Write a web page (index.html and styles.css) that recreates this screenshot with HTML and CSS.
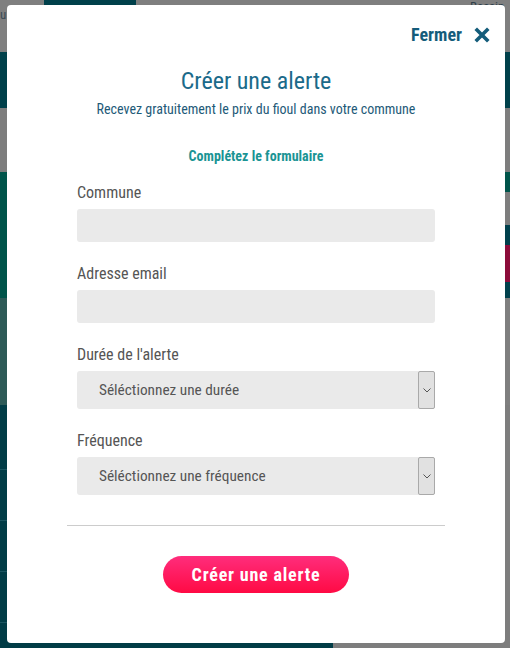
FILE: index.html
```html
<!DOCTYPE html>
<html lang="fr">
<head>
<meta charset="utf-8">
<title>Créer une alerte</title>
<link rel="stylesheet" href="styles.css">
</head>
<body>
<div class="page">
  <div class="row row-top">
    <div class="tab"></div>
    <span class="top-left-text">u</span>
    <span class="top-right-text">Bessin</span>
  </div>
  <div class="row row-teal"></div>
  <div class="row row-gray"></div>
  <div class="row row-green">
    <div class="fill green"></div>
    <div class="edge-right">
      <div class="seg seg-green"></div>
      <div class="seg seg-gray"></div>
      <div class="seg seg-teal"></div>
      <div class="seg seg-red"></div>
      <div class="seg seg-teal2"></div>
    </div>
  </div>
  <div class="row row-mid">
    <div class="fill mid"></div>
  </div>
  <div class="row row-bottom">
    <div class="fill bottom-teal">
      <div class="line"></div><div class="line"></div><div class="line"></div><div class="line"></div>
    </div>
    <div class="fill bottom-gray"></div>
  </div>

  <div class="modal">
    <div class="modal-head">
      <a class="close" href="#">Fermer
        <svg class="close-icon" viewBox="0 0 16 16" width="16" height="16" aria-hidden="true">
          <path d="M3 3 L13 13 M13 3 L3 13" stroke="#145c7a" stroke-width="3.6" stroke-linecap="square" fill="none"/>
        </svg>
      </a>
    </div>
    <h1 class="title">Créer une alerte</h1>
    <p class="subtitle">Recevez gratuitement le prix du fioul dans votre commune</p>
    <p class="hint">Complétez le formulaire</p>
    <form class="form">
      <div class="field">
        <label class="label">Commune</label>
        <div class="input"></div>
      </div>
      <div class="field">
        <label class="label">Adresse email</label>
        <div class="input"></div>
      </div>
      <div class="field">
        <label class="label">Durée de l'alerte</label>
        <div class="select">
          <span class="select-text">Séléctionnez une durée</span>
          <span class="select-arrow">
            <svg viewBox="0 0 8 5" width="8" height="5"><path d="M0.5 0.5 L4 4 L7.5 0.5" stroke="#555" stroke-width="1" fill="none"/></svg>
          </span>
        </div>
      </div>
      <div class="field">
        <label class="label">Fréquence</label>
        <div class="select">
          <span class="select-text">Séléctionnez une fréquence</span>
          <span class="select-arrow">
            <svg viewBox="0 0 8 5" width="8" height="5"><path d="M0.5 0.5 L4 4 L7.5 0.5" stroke="#555" stroke-width="1" fill="none"/></svg>
          </span>
        </div>
      </div>
    </form>
    <hr class="sep">
    <div class="actions">
      <button class="btn" type="button">Créer une alerte</button>
    </div>
  </div>
</div>
</body>
</html>
```
FILE: styles.css
```css
* { box-sizing: border-box; }
html, body { margin: 0; padding: 0; }
body {
  width: 510px;
  height: 648px;
  overflow: hidden;
  background: #7f7f7f;
  font-family: "Roboto Condensed", "DejaVu Sans Condensed", sans-serif;
}
.page { position: relative; width: 510px; height: 648px; }
.row { display: flex; width: 510px; }
.row-top { height: 52px; background: #7f7f7f; position: relative; }
.tab { position: absolute; left: 44px; top: 0; width: 92px; height: 6px; background: #00404a; }
.top-left-text { position: absolute; left: 0; top: 8px; color: #3a4a55; font-size: 13px; line-height: 14px; }
.top-right-text { position: absolute; left: 470px; top: 0; color: #2f3f4a; font-size: 13px; line-height: 14px; }
.row-teal { height: 56px; background: #00404a; }
.row-gray { height: 64px; background: #7d7d7d; }
.row-green { height: 126px; }
.fill { flex: 1; }
.green { background: #00544a; }
.edge-right { width: 5px; display: flex; flex-direction: column; }
.seg-green { height: 20px; background: #00544a; }
.seg-gray { height: 33px; background: #7d7d7d; }
.seg-teal { height: 20px; background: #00404c; }
.seg-red { height: 37px; background: #8c0c3a; }
.seg-teal2 { height: 16px; background: #00404c; }
.row-mid { height: 107px; }
.mid { flex: none; width: 10px; background: #2d5a57; }
.row-bottom { height: 243px; }
.bottom-teal { flex: none; width: 333px; background: #013c46; padding-top: 64px; }
.bottom-teal .line { height: 1px; background: #1b5560; margin-bottom: 50px; }
.bottom-gray { background: #7d7d7d; }

.modal {
  position: absolute;
  left: 7px;
  top: 5px;
  width: 498px;
  height: 638px;
  background: #fff;
  border-radius: 4px;
  padding: 20px 15px 0 15px;
  display: flex;
  flex-direction: column;
  align-items: center;
}
.modal-head { align-self: stretch; display: flex; justify-content: flex-end; height: 20px; }
.close {
  display: flex;
  align-items: center;
  gap: 12px;
  color: #145c7a;
  text-decoration: none;
  font-size: 18px;
  font-weight: 700;
  line-height: 20px;
}
.close-icon { display: block; }
.title {
  margin: 21px 0 0;
  font-size: 24px;
  font-weight: 400;
  line-height: 30px;
  color: #1b6a8a;
}
.subtitle {
  margin: 4px 0 0;
  font-size: 14px;
  font-weight: 400;
  line-height: 18px;
  color: #1e5a78;
}
.hint {
  margin: 29px 0 0;
  font-size: 14px;
  font-weight: 700;
  line-height: 18px;
  color: #1a9494;
}
.form {
  margin-top: 18px;
  width: 358px;
  display: flex;
  flex-direction: column;
  gap: 22px;
}
.field { display: flex; flex-direction: column; gap: 6px; }
.label { font-size: 16px; line-height: 20px; color: #555; }
.input { height: 33px; background: #eaeaea; border-radius: 3px; }
.select {
  height: 38px;
  background: #eaeaea;
  border-radius: 3px;
  display: flex;
  align-items: center;
  justify-content: space-between;
  padding-left: 22px;
}
.select-text { font-size: 15.3px; color: #555; }
.select-arrow {
  width: 17px;
  height: 38px;
  background: #e1e1e1;
  border: 1px solid #a9a9a9;
  border-radius: 2px;
  display: flex;
  align-items: center;
  justify-content: center;
}
.sep {
  width: 378px;
  margin: 30px 0 0;
  border: 0;
  border-top: 1px solid #cccccc;
}
.actions { margin-top: 30px; }
.btn {
  width: 186px;
  height: 37px;
  border: 0;
  border-radius: 19px;
  background: linear-gradient(#ff2d7c, #ff0a44);
  color: #fff;
  font-family: inherit;
  font-size: 18px;
  font-weight: 700;
  letter-spacing: 0.8px;
  padding: 0;
}
```
